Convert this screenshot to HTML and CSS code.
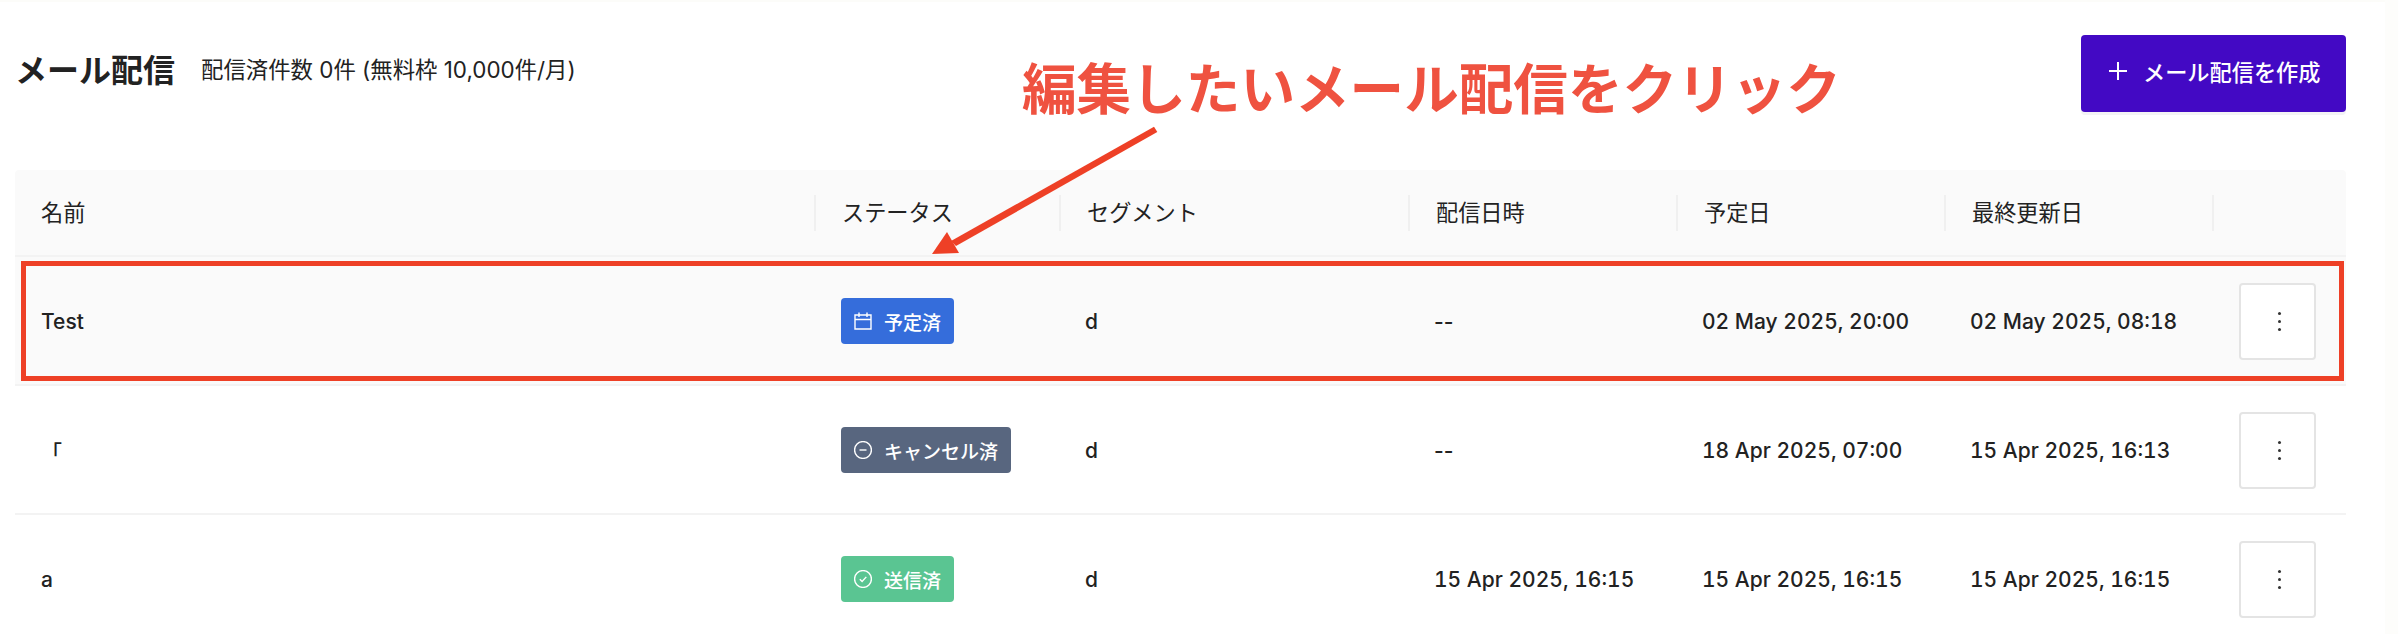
FILE: index.html
```html
<!DOCTYPE html>
<html lang="ja">
  <head>
    <meta charset="UTF-8" />
    <meta name="viewport" content="width=device-width, initial-scale=1.0" />
    <title>メール配信</title>
    <link rel="stylesheet" href="styles.css">
  </head>
  <body>
    <main class="page">
      <header class="head">
        <div class="head__info">
          <h1 class="head__title">メール配信</h1>
          <p class="head__count">配信済件数 0件 (無料枠 10,000件/月)</p>
        </div>
        <button class="create">
          <svg class="create__icon" viewBox="0 0 18 18" width="18" height="18"><path d="M9 0v18M0 9h18" /></svg>
          メール配信を作成
        </button>
      </header>

      <section class="list">
        <div class="row row--head">
          <div class="cell">名前</div>
          <div class="cell">ステータス</div>
          <div class="cell">セグメント</div>
          <div class="cell">配信日時</div>
          <div class="cell">予定日</div>
          <div class="cell">最終更新日</div>
          <div class="cell"></div>
        </div>

        <div class="row row--active">
          <div class="cell">Test</div>
          <div class="cell">
            <span class="badge badge--blue">
              <svg class="badge__icon" viewBox="0 0 18 18" width="18" height="18"><path d="M1 3h16v14H1zM1 7.5h16M5 0.5v4.5M13 0.5v4.5" /></svg>
              予定済
            </span>
          </div>
          <div class="cell">d</div>
          <div class="cell">--</div>
          <div class="cell cell--date">02 May 2025, 20:00</div>
          <div class="cell cell--date">02 May 2025, 08:18</div>
          <div class="cell"><button class="more"><span class="more__dots"></span></button></div>
        </div>

        <div class="row">
          <div class="cell">「</div>
          <div class="cell">
            <span class="badge badge--slate">
              <svg class="badge__icon" viewBox="0 0 18 18" width="18" height="18"><circle cx="9" cy="9" r="8.4" /><path d="M5.5 9h7" /></svg>
              キャンセル済
            </span>
          </div>
          <div class="cell">d</div>
          <div class="cell">--</div>
          <div class="cell cell--date">18 Apr 2025, 07:00</div>
          <div class="cell cell--date">15 Apr 2025, 16:13</div>
          <div class="cell"><button class="more"><span class="more__dots"></span></button></div>
        </div>

        <div class="row">
          <div class="cell">a</div>
          <div class="cell">
            <span class="badge badge--green">
              <svg class="badge__icon" viewBox="0 0 18 18" width="18" height="18"><circle cx="9" cy="9" r="8.4" /><path d="M5.8 9.2l2.3 2.3 4.2-4.6" /></svg>
              送信済
            </span>
          </div>
          <div class="cell">d</div>
          <div class="cell cell--date">15 Apr 2025, 16:15</div>
          <div class="cell cell--date">15 Apr 2025, 16:15</div>
          <div class="cell cell--date">15 Apr 2025, 16:15</div>
          <div class="cell"><button class="more"><span class="more__dots"></span></button></div>
        </div>
      </section>

      <!-- annotation drawn over the screenshot -->
      <p class="note">編集したいメール配信をクリック</p>
      <svg class="note__arrow" viewBox="0 0 2398 634" width="2398" height="634">
        <path d="M1154 126.7L1157.3 132L956 246L951 241Z" />
        <path d="M932 254L947 232L959 253Z" />
      </svg>
      <div class="note__box"></div>
    </main>
  </body>
</html>
```

FILE: styles.css
```css
* {
  margin: 0;
  padding: 0;
  box-sizing: border-box;
  font-family: "Inter", "Noto Sans CJK JP", sans-serif;
}
html, body {
  height: 100%;
  overflow: hidden;
  background-color: #fdfdfb;
}
.page {
  position: relative;
  width: 2385px;
  height: 634px;
  background-color: #fff;
  box-shadow: inset 0 2px 0 #fcfcf9;
  padding: 35px 0 0 15px;
}
.head {
  display: flex;
  justify-content: space-between;
  align-items: center;
  width: 2331px;
  height: 77px;
  margin-bottom: 58px;
}
.head__info {
  display: flex;
  align-items: center;
  gap: 26px;
  padding-bottom: 11px;
}
.head__title {
  font-size: 32px;
  font-weight: 700;
  color: #222;
}
.head__count {
  font-size: 22.4px;
  color: #222;
}
.create {
  display: flex;
  align-items: center;
  gap: 16px;
  width: 265px;
  height: 77px;
  padding: 0 0 5px 28px;
  border: none;
  border-radius: 4px;
  background-color: #4309c4;
  box-shadow: 0 3px 0 #f3f3f5;
  color: #fff;
  font-size: 22.2px;
  font-weight: 500;
}
.create__icon {
  fill: none;
  stroke: #fff;
  stroke-width: 2;
}
.list {
  width: 2331px;
}
.row {
  display: grid;
  grid-template-columns: 799px 245px 349px 268px 268px 268px 134px;
  align-items: center;
  height: 129px;
  padding-top: 2px;
  border-bottom: 2px solid #f3f3f3;
  font-size: 21px;
  font-weight: 500;
  color: #222;
}
.row--head {
  height: 87px;
  padding-top: 0;
  background-color: #fafafa;
  border-radius: 4px 4px 0 0;
  font-size: 22.2px;
  font-weight: 400;
}
.row--active {
  background-color: #fafafa;
}
.cell {
  padding-left: 26px;
}
.cell--date {
  font-variant-numeric: tabular-nums;
}
.row--head .cell {
  display: flex;
  align-items: center;
  height: 36px;
  padding-bottom: 4px;
}
.row--head .cell + .cell {
  border-left: 2px solid #f0f0f0;
}
.badge {
  display: flex;
  align-items: center;
  gap: 12px;
  width: fit-content;
  height: 46px;
  margin: 0 0 1px 1px;
  padding: 0 13px;
  border-radius: 4px;
  color: #fff;
  font-size: 19px;
}
.badge--blue {
  background-color: #356ddb;
}
.badge--slate {
  background-color: #58667f;
}
.badge--green {
  background-color: #5ac592;
}
.badge__icon {
  fill: none;
  stroke: #fff;
  stroke-width: 1.4;
}
.more {
  display: flex;
  justify-content: center;
  align-items: center;
  width: 77px;
  height: 77px;
  margin-left: 1px;
  background-color: #fff;
  border: 2px solid #e4e4e4;
  border-radius: 4px;
}
.more__dots {
  width: 3px;
  height: 3px;
  margin-left: 3px;
  border-radius: 50%;
  background-color: #333;
  box-shadow: 0 -8px 0 #333, 0 8px 0 #333;
}
.note {
  position: absolute;
  left: 1022px;
  top: 50px;
  font-size: 54.6px;
  font-weight: 700;
  line-height: 78px;
  white-space: nowrap;
  color: #ef5240;
}
.note__arrow {
  position: absolute;
  left: 0;
  top: 0;
  fill: #ee4026;
}
.note__box {
  position: absolute;
  left: 21px;
  top: 261px;
  width: 2323px;
  height: 120px;
  border: 5px solid #ee4026;
}
```
